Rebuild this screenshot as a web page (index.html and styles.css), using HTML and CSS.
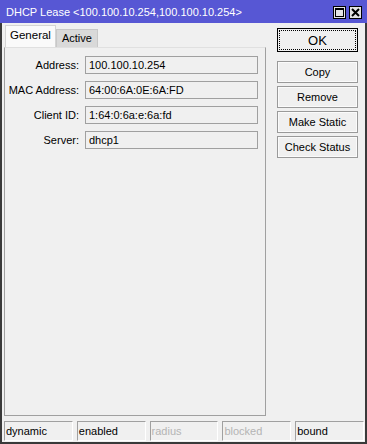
FILE: index.html
```html
<!DOCTYPE html>
<html>
<head>
    <title>DHCP Lease</title>
    <meta name="viewport" content="width=device-width, initial-scale=1.0">
    <link rel="stylesheet" href="styles.css">
</head>
<body>
    <div class="window">
        <div class="titlebar">
            <span class="title">DHCP Lease &lt;100.100.10.254,100.100.10.254&gt;</span>
            <div class="title-buttons">
                <span class="tbtn">
                    <svg width="11" height="11" viewBox="0 0 11 11"><rect x="1.5" y="1.5" width="8" height="8" fill="none" stroke="#000" stroke-width="1"/><rect x="1" y="1" width="9" height="2" fill="#000"/></svg>
                </span>
                <span class="tbtn">
                    <svg width="11" height="11" viewBox="0 0 11 11"><path d="M2 2 L9 9 M9 2 L2 9" stroke="#000" stroke-width="2"/></svg>
                </span>
            </div>
        </div>

        <div class="main">
            <div class="left">
                <div class="tabs">
                    <span class="tab active">General</span>
                    <span class="tab">Active</span>
                </div>
                <div class="panel">
                    <div class="row">
                        <label>Address:</label>
                        <div class="field">100.100.10.254</div>
                    </div>
                    <div class="row">
                        <label>MAC Address:</label>
                        <div class="field">64:00:6A:0E:6A:FD</div>
                    </div>
                    <div class="row">
                        <label>Client ID:</label>
                        <div class="field">1:64:0:6a:e:6a:fd</div>
                    </div>
                    <div class="row">
                        <label>Server:</label>
                        <div class="field">dhcp1</div>
                    </div>
                </div>
            </div>

            <div class="buttons">
                <button class="btn ok"><span>OK</span></button>
                <div class="btn-group">
                    <button class="btn">Copy</button>
                    <button class="btn">Remove</button>
                    <button class="btn">Make Static</button>
                    <button class="btn">Check Status</button>
                </div>
            </div>
        </div>

        <div class="statusbar">
            <div class="cell">dynamic</div>
            <div class="cell">enabled</div>
            <div class="cell off">radius</div>
            <div class="cell off">blocked</div>
            <div class="cell">bound</div>
        </div>
    </div>
</body>
</html>
```

FILE: styles.css
```css
/* Winbox style dialog */
body {
    margin: 0;
    font-family: 'Liberation Sans', Arial, sans-serif;
    font-size: 11px;
    color: #000;
    background: #f0f0f0;
}

.window {
    width: 367px;
    height: 444px;
    box-sizing: border-box;
    border: 2px solid #3a3a3a;
    border-top: 0;
    background: #f0f0f0;
    display: flex;
    flex-direction: column;
}

.titlebar {
    height: 23px;
    margin: 0 -2px;
    padding: 0 5px 0 6px;
    background: #5757d4;
    color: #fff;
    font-size: 11px;
    display: flex;
    align-items: center;
    justify-content: space-between;
}

.title-buttons {
    display: flex;
    gap: 3px;
    margin-top: 1px;
}

.tbtn {
    width: 13px;
    height: 13px;
    box-sizing: border-box;
    border: 1px solid #000;
    background: #e4e4e4;
    display: flex;
    align-items: center;
    justify-content: center;
}

.tbtn svg {
    display: block;
}

.main {
    flex: 1;
    display: flex;
    padding: 0 0 0 2px;
}

.left {
    width: 262px;
    display: flex;
    flex-direction: column;
}

/* Tabs */
.tabs {
    display: flex;
    align-items: flex-end;
    height: 24px;
    padding-left: 1px;
}

.tab {
    height: 14px;
    padding: 2px 5px 1px;
    background: #d9d9d9;
    border: 1px solid #c8c8c8;
    border-bottom: 0;
}

.tab.active {
    height: 18px;
    padding: 3px 4px 0 4px;
    background: #fafafa;
    border-color: #d4d4d4;
    font-size: 11.5px;
}

.panel {
    flex: 1;
    border: 1px solid #a0a0a0;
    border-top-color: #e0e0e0;
    padding: 8px 0 0;
    display: flex;
    flex-direction: column;
    gap: 7px;
}

.row {
    display: flex;
    align-items: center;
    gap: 6px;
    height: 18px;
}

.row label {
    width: 74px;
    text-align: right;
}

.field {
    width: 173px;
    height: 18px;
    box-sizing: border-box;
    border: 1px solid #a0a0a0;
    padding: 0 3px;
    line-height: 16px;
    background: #f0f0f0;
}

/* Right side buttons */
.buttons {
    margin-left: 11px;
    width: 81px;
    padding-top: 5px;
    display: flex;
    flex-direction: column;
}

.btn {
    height: 22px;
    width: 81px;
    font-family: inherit;
    font-size: 11px;
    color: #000;
    background: #f0f0f0;
    border: 1px solid #9a9a9a;
    box-shadow: inset 0 0 0 1px #fbfbfb;
    padding: 0;
}

.btn.ok {
    height: 24px;
    border-color: #000;
    box-shadow: none;
    padding: 1px;
    font-size: 13px;
}

.btn.ok span {
    display: flex;
    align-items: center;
    justify-content: center;
    height: 100%;
    box-sizing: border-box;
    border: 1px dotted #000;
}

.btn-group {
    margin-top: 9px;
    display: flex;
    flex-direction: column;
    gap: 3px;
}

/* Status bar */
.statusbar {
    height: 20px;
    margin: 5px 1px 1px 2px;
    display: grid;
    grid-template-columns: repeat(5, 1fr);
    gap: 4px;
}

.cell {
    border: 1px solid;
    border-color: #a0a0a0 #fff #fff #a0a0a0;
    padding-left: 1px;
    line-height: 18px;
    font-size: 11px;
}

.cell.off {
    color: #b4b4b4;
}
```
